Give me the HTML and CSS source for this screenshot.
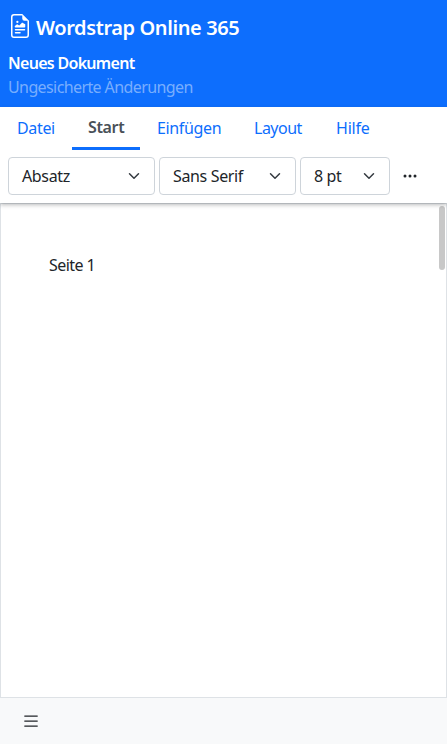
FILE: index.html
```html
<!DOCTYPE html>
<html lang="de">
<head>
<meta charset="utf-8">
<meta name="viewport" content="width=device-width, initial-scale=1">
<title>Wordstrap Online 365</title>
<link rel="stylesheet" href="styles.css">
</head>
<body>
<header class="header">
  <h1 class="brand">
    <svg class="brand-icon" viewBox="0 0 16 16" fill="currentColor" aria-hidden="true"><path d="M14 4.500V14a2 2 0 0 1-2 2H4a2 2 0 0 1-2-2V2a2 2 0 0 1 2-2h5.500zm-3 0A1.500 1.500 0 0 1 9.500 3V1H4a1 1 0 0 0-1 1v12a1 1 0 0 0 1 1h8a1 1 0 0 0 1-1V4.500z"/><path d="M4.500 12.500A.5.5 0 0 1 5 12h3a.5.5 0 0 1 0 1H5a.5.5 0 0 1-.5-.5m0-2A.5.5 0 0 1 5 10h6a.5.5 0 0 1 0 1H5a.5.5 0 0 1-.5-.5m1.639-3.708 1.330.886 1.854-1.855a.25.25 0 0 1 .289-.047l1.888.974V8.500a.5.5 0 0 1-.5.5H5a.5.5 0 0 1-.5-.5V8s1.540-1.274 1.639-1.208M6.250 6a.75.75 0 1 0 0-1.500.75.75 0 0 0 0 1.500"/></svg>
    <span>Wordstrap Online 365</span>
  </h1>
  <div class="doc-name">Neues Dokument</div>
  <div class="doc-status">Ungesicherte Änderungen</div>
</header>
<div class="ribbon">
  <nav class="tabs">
    <a class="tab">Datei</a>
    <a class="tab active">Start</a>
    <a class="tab insert">Einfügen</a>
    <a class="tab layout">Layout</a>
    <a class="tab help">Hilfe</a>
  </nav>
  <div class="toolbar">
    <div class="select paragraph"><span>Absatz</span><svg class="chevron" viewBox="0 0 16 16"><path d="m2 5 6 6 6-6"/></svg></div>
    <div class="select family"><span>Sans Serif</span><svg class="chevron" viewBox="0 0 16 16"><path d="m2 5 6 6 6-6"/></svg></div>
    <div class="select size"><span>8 pt</span><svg class="chevron" viewBox="0 0 16 16"><path d="m2 5 6 6 6-6"/></svg></div>
    <svg class="more" viewBox="0 0 16 16" fill="currentColor"><path d="M3 9.500a1.500 1.500 0 1 1 0-3 1.500 1.500 0 0 1 0 3m5 0a1.500 1.500 0 1 1 0-3 1.500 1.500 0 0 1 0 3m5 0a1.500 1.500 0 1 1 0-3 1.500 1.500 0 0 1 0 3"/></svg>
  </div>
</div>
<main class="page">
  <p class="text">Seite 1</p>
  <div class="thumb"></div>
</main>
<footer class="footer">
  <svg class="menu" viewBox="0 0 16 16" fill="currentColor"><path fill-rule="evenodd" d="M2.500 12a.5.5 0 0 1 .5-.5h10a.5.5 0 0 1 0 1H3a.5.5 0 0 1-.5-.5m0-4a.5.5 0 0 1 .5-.5h10a.5.5 0 0 1 0 1H3a.5.5 0 0 1-.5-.5m0-4a.5.5 0 0 1 .5-.5h10a.5.5 0 0 1 0 1H3a.5.5 0 0 1-.5-.5"/></svg>
</footer>
</body>
</html>
```
FILE: styles.css
```css
* { box-sizing: border-box; }
body {
  margin: 0;
  height: 100vh;
  display: flex;
  flex-direction: column;
  overflow: hidden;
  background: #fff;
  color: #212529;
  font: 16px/24px "Noto Sans", sans-serif;
}
.header {
  height: 107px;
  padding: 13px 8px 0;
  background: #0d6efd;
  color: #fff;
}
.brand {
  display: flex;
  align-items: center;
  gap: 4px;
  height: 30px;
  margin: 0 0 8px;
  font-size: 20px;
  font-weight: 600;
  letter-spacing: -.4px;
}
.brand-icon { width: 24px; height: 24px; margin-top: -4px; }
.doc-name { font-weight: 600; letter-spacing: -.7px; }
.doc-status { color: rgba(255, 255, 255, .45); letter-spacing: -.6px; }
.ribbon {
  position: relative;
  z-index: 1;
  height: 96px;
  box-shadow: 0 2px 4px rgba(33, 37, 41, .3);
  background: #fff;
}
.tabs { display: flex; height: 43px; padding-left: 1px; }
.tab {
  flex: 0 0 71px;
  padding: 9px 0 0 16px;
  color: #0d6efd;
  letter-spacing: -.35px;
}
.tab.active {
  flex-basis: 68px;
  color: #495057;
  font-weight: 600;
  padding-top: 8px;
  border-bottom: 3px solid #0d6efd;
}
.tab.insert { flex-basis: 98px; padding-left: 17px; }
.tab.layout { flex-basis: 82px; letter-spacing: -.5px; }
.tab.help { letter-spacing: -.2px; }
.toolbar { display: flex; gap: 4px; padding: 7px 8px 0; }
.select {
  display: flex;
  align-items: center;
  justify-content: space-between;
  height: 38px;
  padding: 0 12px 0 13px;
  border: 1px solid #ced4da;
  border-radius: 4px;
  letter-spacing: -.35px;
}
.paragraph { width: 147px; }
.family { width: 137px; }
.size { width: 90px; }
.chevron {
  width: 16px;
  height: 12px;
  fill: none;
  stroke: #343a40;
  stroke-width: 2;
  stroke-linecap: round;
  stroke-linejoin: round;
}
.paragraph .chevron, .family .chevron, .size .chevron { height: 16px; width: 12px; margin-right: 2px; }
.more { width: 16px; height: 16px; margin: 11px 0 0 8px; }
.page {
  position: relative;
  flex: 1;
  border: 1px solid #dee2e6;
  padding: 49px 48px;
}
.text { margin: 0; letter-spacing: -.55px; }
.thumb {
  position: absolute;
  top: 2px;
  right: 1px;
  width: 6px;
  height: 64px;
  border-radius: 3px;
  background: #c8c8c8;
}
.footer { height: 46px; padding: 13px 21px; background: #f8f9fa; }
.menu { display: block; width: 20px; height: 20px; }
```
